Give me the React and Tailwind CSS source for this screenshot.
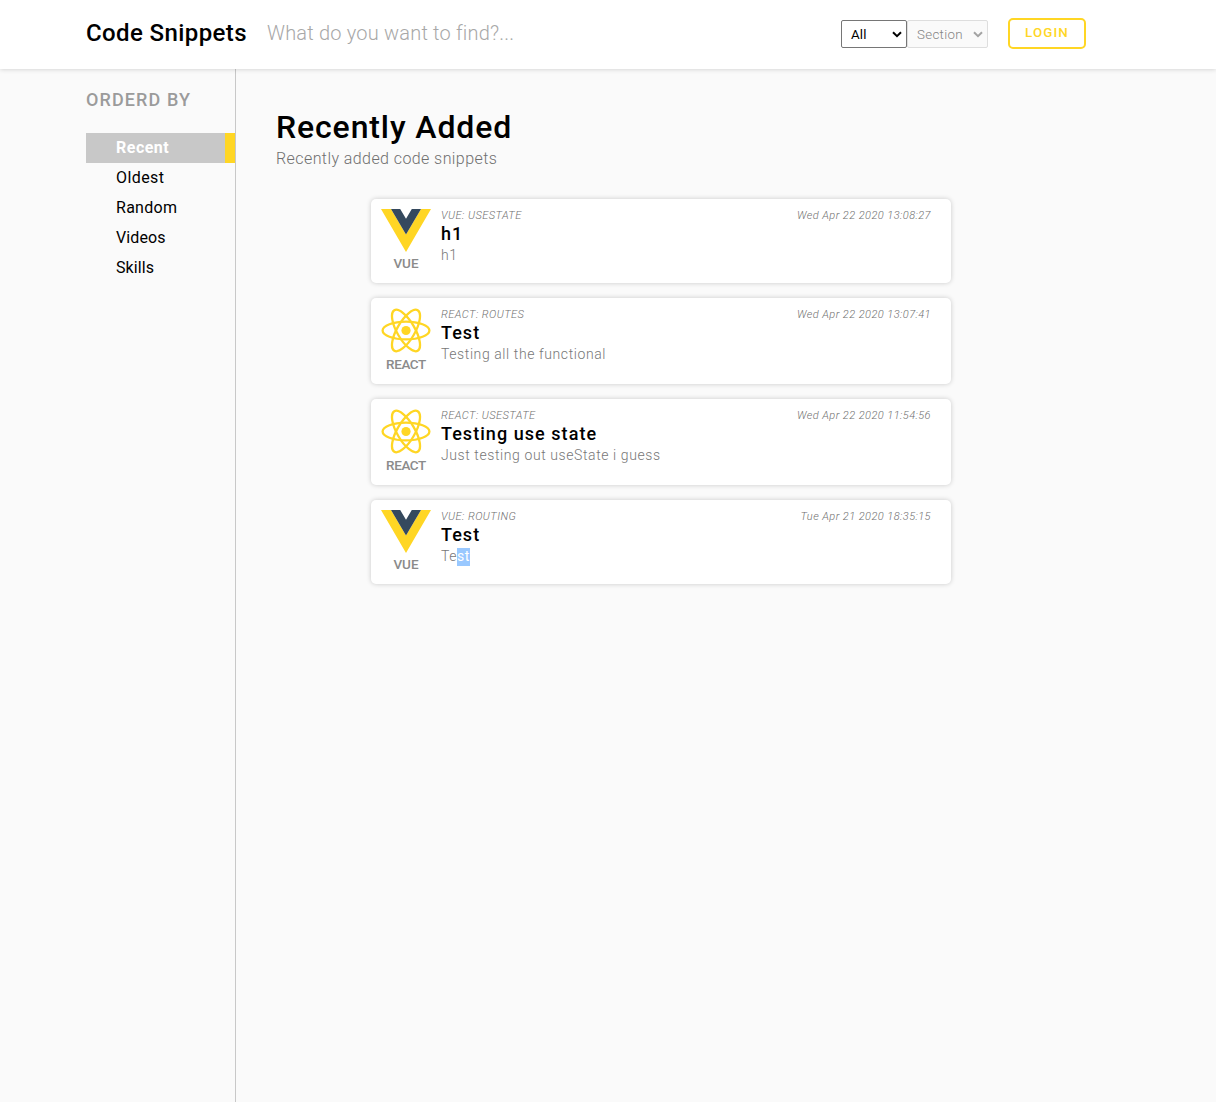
import React from "react";

function VueLogo() {
  return (
    <svg className="block h-[43px] w-[50px]" viewBox="0 0 50 43">
      <path d="M0 0H10L25 25.5 40 0H50L25 43Z" fill="#ffd624" />
      <path d="M10 0H19.2L25 9.8 30.8 0H40L25 25.5Z" fill="#35495e" />
    </svg>
  );
}

function ReactLogo() {
  return (
    <svg className="block h-[45px] w-[50px]" viewBox="0 0 50 45">
      <circle cx="25" cy="22.5" r="4.6" fill="#ffd624" />
      <g fill="none" stroke="#ffd624" strokeWidth="2.3">
        <ellipse cx="25" cy="22.5" rx="23.4" ry="8.9" />
        <ellipse cx="25" cy="22.5" rx="23.4" ry="8.9" transform="rotate(60 25 22.5)" />
        <ellipse cx="25" cy="22.5" rx="23.4" ry="8.9" transform="rotate(120 25 22.5)" />
      </g>
    </svg>
  );
}

function Chevron() {
  return (
    <svg className="block h-[7px] w-[10px]" viewBox="0 0 10 7" fill="none" stroke="currentColor" strokeWidth="2">
      <path d="M1 1.2 5 5.1 9 1.2" />
    </svg>
  );
}

const orders = [
  { label: "Oldest", spacing: "tracking-[0.42px]" },
  { label: "Random", spacing: "tracking-[0.28px]" },
  { label: "Videos", spacing: "tracking-[0.1px]" },
  { label: "Skills", spacing: "tracking-[0.09px]" },
];

const snippets = [
  { kind: "VUE", topic: "USESTATE", title: "h1", text: "h1", date: "Wed Apr 22 2020 13:08:27" },
  { kind: "REACT", topic: "ROUTES", title: "Test", text: "Testing all the functional", date: "Wed Apr 22 2020 13:07:41" },
  { kind: "REACT", topic: "USESTATE", title: "Testing use state", text: "Just testing out useState i guess", date: "Wed Apr 22 2020 11:54:56" },
  { kind: "VUE", topic: "ROUTING", title: "Test", text: "Te", marked: "st", date: "Tue Apr 21 2020 18:35:15" },
];

function Snippet({ kind, topic, title, text, marked, date }) {
  const vue = kind === "VUE";
  return (
    <article className={`flex w-[580px] rounded-[5px] bg-white pl-[10px] pr-5 pt-[10px] shadow-[0_0_5px_rgba(0,0,0,0.2)] ${vue ? "h-[84px]" : "h-[86px]"}`}>
      <div className="flex w-[50px] flex-col items-center">
        {vue ? <VueLogo /> : <ReactLogo />}
        <span className={`mt-[2px] text-[13.5px] leading-[18px] font-medium text-[#8b8b8b] ${vue ? "" : "tracking-[-0.4px]"}`}>{kind}</span>
      </div>
      <div className="ml-[10px] flex-1">
        <div className="flex h-[13px] justify-between text-[11px] leading-[13px] font-light italic text-[#6f6f6f]">
          <span className="tracking-[0.46px]">{kind}: {topic}</span>
          <span className="tracking-[0.45px]">{date}</span>
        </div>
        <h2 className="h-[23px] text-lg leading-[23px] font-medium tracking-[1.05px]">{title}</h2>
        <p className="mt-[2px] flex h-[18px] text-sm leading-4 font-light tracking-[0.59px] text-[#777]">
          <span>{text}</span>
          {marked && <span className="bg-[#99c8ff] font-normal tracking-[0.5px] text-white">{marked}</span>}
        </p>
      </div>
    </article>
  );
}

export default function App() {
  return (
    <div className="flex h-[1102px] w-[1216px] flex-col overflow-hidden bg-[#fafafa] font-['Roboto',sans-serif] text-black">
      <header className="relative z-10 flex h-[69px] shrink-0 items-start bg-white pl-[86px] pr-[130px] shadow-[0_0_5px_rgba(0,0,0,0.2)]">
        <h1 className="mt-[17px] w-[181px] text-2xl leading-8 font-medium tracking-[0.39px] whitespace-nowrap">Code Snippets</h1>
        <div className="mt-[17px] flex-1 text-xl leading-8 font-light tracking-[0.2px] text-[#a8a8a8]">What do you want to find?...</div>
        <div className="mt-5 flex">
          <div className="flex h-7 w-[66px] items-center justify-between rounded-[2px] border border-[#767676] pl-[9px] pr-[4px] text-[13.33px] tracking-[0.15px]">
            <span className="pt-[2px]">All</span><Chevron />
          </div>
          <div className="flex h-7 w-[81px] items-center justify-between rounded-[2px] border border-[#dedede] bg-[#fafafa] pl-[9px] pr-[4px] text-[13.33px] font-light tracking-[0.3px] text-[#858585]">
            <span className="pt-[2px]">Section</span><span className="text-[#a3a3a3]"><Chevron /></span>
          </div>
        </div>
        <button className="mt-[18px] ml-5 h-[31px] w-[78px] rounded-[5px] border-2 border-[#ffd624] pb-[2px] text-[13.33px] leading-[25px] font-medium tracking-[1.1px] text-[#ffd624]">LOGIN</button>
      </header>
      <div className="flex min-h-0 flex-1">
        <aside className="w-[236px] border-r border-[#c8c8c8] pl-[86px]">
          <h3 className="mt-[19px] text-lg leading-6 font-medium tracking-[1.1px] text-[#9b9b9b]">ORDERD BY</h3>
          <nav className="mt-[21px]">
            <div className="h-[30px] border-r-[10px] border-[#ffd624] bg-[#c8c8c8] pl-[30px] leading-[29px] font-bold tracking-[0.5px] text-white">Recent</div>
            {orders.map((o) => (
              <div key={o.label} className={`h-[30px] pl-[30px] leading-[29px] ${o.spacing}`}>{o.label}</div>
            ))}
          </nav>
        </aside>
        <main className="flex-1 pl-10">
          <h2 className="mt-[39px] text-[32px] leading-[38px] font-medium tracking-[0.88px]">Recently Added</h2>
          <p className="mt-[3px] leading-5 font-light tracking-[0.42px] text-[#6f6f6f]">Recently added code snippets</p>
          <div className="mt-[30px] ml-[95px] flex flex-col gap-[15px]">
            {snippets.map((s) => <Snippet key={s.date} {...s} />)}
          </div>
        </main>
      </div>
    </div>
  );
}
